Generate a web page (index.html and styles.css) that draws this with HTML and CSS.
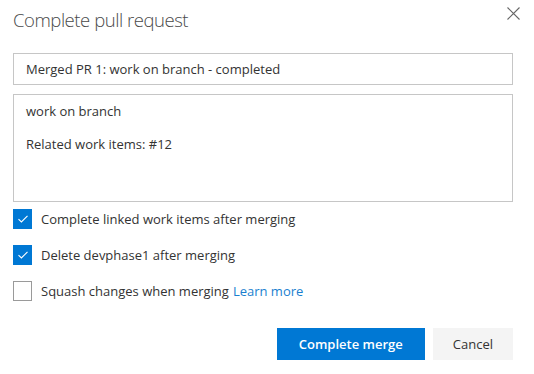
FILE: index.html
```html
<!DOCTYPE html>
<html lang="en">
<head>
    <meta charset="UTF-8">
    <title>Complete pull request</title>
    <link rel="stylesheet" href="styles.css">
</head>
<body>
    <div class="dialog">
        <div class="dialog-header">
            <h1>Complete pull request</h1>
            <button class="close" aria-label="Close">
                <svg width="13" height="13" viewBox="0 0 13 13"><path d="M0.5 0.5L12.5 12.5M12.5 0.5L0.5 12.5" stroke="#666" stroke-width="1.1" fill="none"/></svg>
            </button>
        </div>
        <div class="field title-field">Merged PR 1: work on branch - completed</div>
        <div class="field desc-field">
            <p>work on branch</p>
            <p>Related work items: #12</p>
        </div>
        <div class="options">
            <label class="option">
                <span class="box checked">
                    <svg width="12" height="10" viewBox="0 0 12 10"><path d="M1.5 5.2L4.4 8L10.5 1.8" stroke="#fff" stroke-width="1.1" fill="none"/></svg>
                </span>
                Complete linked work items after merging
            </label>
            <label class="option">
                <span class="box checked">
                    <svg width="12" height="10" viewBox="0 0 12 10"><path d="M1.5 5.2L4.4 8L10.5 1.8" stroke="#fff" stroke-width="1.1" fill="none"/></svg>
                </span>
                Delete devphase1 after merging
            </label>
            <label class="option">
                <span class="box"></span>
                Squash changes when merging <a href="#" class="learn">Learn more</a>
            </label>
        </div>
        <div class="actions">
            <button class="btn primary">Complete merge</button>
            <button class="btn">Cancel</button>
        </div>
    </div>
</body>
</html>
```

FILE: styles.css
```css
body {
    margin: 0;
    background-color: white;
    font-family: 'Segoe UI', 'Open Sans', sans-serif;
    color: #333;
}
.dialog {
    width: 500px;
    padding: 0 21px 0 13px;
}
.dialog-header {
    display: flex;
    justify-content: space-between;
    align-items: flex-start;
    height: 53px;
}
h1 {
    margin: 7px 0 0 0;
    font-size: 18.5px;
    font-weight: 300;
    color: #4a4a4a;
    letter-spacing: -0.45px;
}
.close {
    margin: 7px -7px 0 0;
    padding: 0;
    border: none;
    background: none;
    cursor: pointer;
    width: 14px;
    height: 14px;
}
.field {
    box-sizing: border-box;
    border: 1px solid #c6c6c6;
    padding: 0 12px;
    font-size: 13px;
    color: #333;
}
.title-field {
    height: 32px;
    line-height: 30px;
}
.desc-field {
    margin-top: 9px;
    height: 108px;
    padding-top: 6px;
}
.desc-field p {
    margin: 0 0 13px 0;
    line-height: 20px;
}
.options {
    display: flex;
    flex-direction: column;
    gap: 16px;
    margin-top: 7px;
}
.option {
    display: flex;
    align-items: center;
    gap: 9px;
    height: 20px;
    font-size: 13px;
    color: #333;
}
.box {
    box-sizing: border-box;
    width: 19px;
    height: 20px;
    border: 1px solid #9a9a9a;
    display: flex;
    align-items: center;
    justify-content: center;
}
.box.checked {
    background-color: #0078d4;
    border-color: #0078d4;
}
.learn {
    color: #1a7fcf;
    text-decoration: none;
    margin-left: -5px;
}
.actions {
    display: flex;
    justify-content: flex-end;
    gap: 8px;
    margin-top: 27px;
}
.btn {
    height: 32px;
    padding: 0 20px;
    border: none;
    background-color: #f4f4f4;
    color: #333;
    font-family: inherit;
    font-size: 13px;
    cursor: pointer;
    min-width: 80px;
}
.btn.primary {
    background-color: #0078d4;
    color: white;
    font-weight: 600;
    width: 148px;
}
```
